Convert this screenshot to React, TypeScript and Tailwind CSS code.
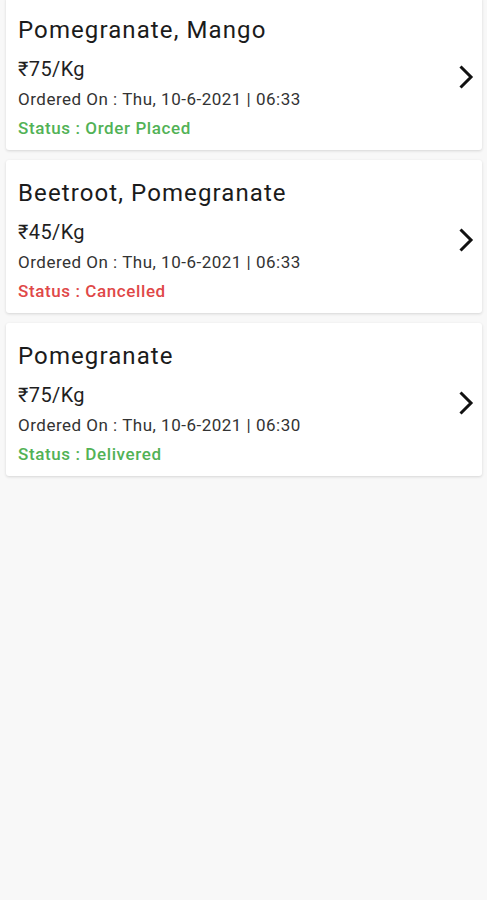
import React from "react";

type Order = {
  items: string;
  price: string;
  orderedOn: string;
  status: string;
  ok: boolean;
};

const orders: Order[] = [
  { items: "Pomegranate, Mango", price: "₹75/Kg", orderedOn: "Thu, 10-6-2021 | 06:33", status: "Order Placed", ok: true },
  { items: "Beetroot, Pomegranate", price: "₹45/Kg", orderedOn: "Thu, 10-6-2021 | 06:33", status: "Cancelled", ok: false },
  { items: "Pomegranate", price: "₹75/Kg", orderedOn: "Thu, 10-6-2021 | 06:30", status: "Delivered", ok: true },
];

function Chevron() {
  return (
    <svg width="16" height="26" viewBox="0 0 16 26" className="shrink-0">
      <path d="M2.5 2.5 L13 13 L2.5 23.5" fill="none" stroke="#111" strokeWidth="3" />
    </svg>
  );
}

function OrderCard({ order }: { order: Order }) {
  return (
    <div className="flex items-center rounded-[3px] bg-white pl-3 pr-2 pt-[17px] pb-[10px] shadow-[0_1px_3px_rgba(0,0,0,0.14)]">
      <div className="flex-1">
        <div className="text-[24px] leading-[32px] tracking-[1.1px] text-[#1b1b1b]">{order.items}</div>
        <div className="mt-[9px] text-[20px] leading-[28px] tracking-[0.4px] text-[#1f1f1f]">{order.price}</div>
        <div className="mt-[4px] text-[17px] leading-[24px] tracking-[0.5px] text-[#333]">Ordered On : {order.orderedOn}</div>
        <div
          className={
            order.ok
              ? "mt-[5px] text-[17px] leading-[24px] tracking-[0.6px] font-medium text-[#52b256]"
              : "mt-[5px] text-[17px] leading-[24px] tracking-[0.6px] font-medium text-[#e04848]"
          }
        >
          Status : {order.status}
        </div>
      </div>
      <Chevron />
    </div>
  );
}

export default function App() {
  return (
    <div className="min-h-screen overflow-hidden bg-[#f8f8f8] font-['Roboto',sans-serif]">
      <div className="-mt-[3px] flex flex-col gap-[10px] px-[6px] pr-[5px]">
        {orders.map((o, i) => (
          <OrderCard key={i} order={o} />
        ))}
      </div>
    </div>
  );
}
